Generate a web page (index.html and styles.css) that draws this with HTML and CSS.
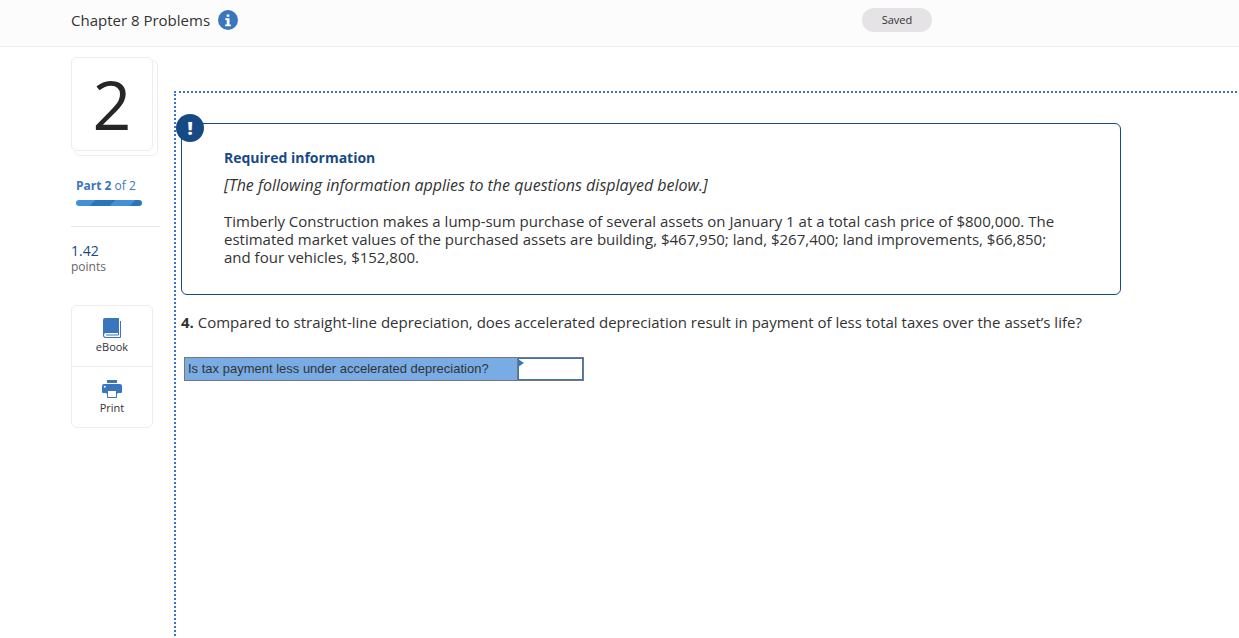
FILE: index.html
```html
<!DOCTYPE html>
<html lang="en">
<head>
  <meta charset="utf-8">
  <title>Chapter 8 Problems</title>
  <meta name="viewport" content="width=device-width, initial-scale=1.0">
  <link rel="stylesheet" href="styles.css">
</head>
<body>
  <header class="header">
    <h1 class="title">Chapter 8 Problems</h1>
    <button class="info-button" type="button" aria-label="Assignment information">
      <svg width="20" height="20" viewBox="0 0 20 20">
        <circle cx="10" cy="10" r="10" fill="#3a76bb"/>
        <path d="M8.600 4.500h2.800v2.300H8.600zM7.300 8.300h4.200v6.200h1.300v1.800H7.200v-1.800h1.500V10H7.300z" fill="#fff"/>
      </svg>
    </button>
    <span class="status">Saved</span>
  </header>

  <div class="page">
    <aside class="sidebar">
      <div class="number-card">2</div>
      <div class="part"><b>Part 2</b> of 2</div>
      <div class="part-bar"></div>
      <div class="points">
        <span class="points-value">1.42</span>
        <span class="points-label">points</span>
      </div>
      <div class="tools">
        <button class="tool" type="button">
          <svg width="20" height="20" viewBox="0 0 20 20">
            <path d="M3 0h14v15H4Q2 15 2 17t2 2h13v1H3.500Q1 20 1 17V2Q1 0 3 0z" fill="#3a76bb"/>
            <path d="M4 17h12.500v-2M18.500 3v16.500H4" fill="none" stroke="#3a76bb"/>
          </svg>
          eBook
        </button>
        <button class="tool" type="button">
          <svg width="20" height="20" viewBox="0 0 20 20">
            <path d="M5 1h10v3H5zM2 5h16q2 0 2 2v6q0 1-1 1H1q-1 0-1-1V7q0-2 2-2z" fill="#3a76bb"/>
            <circle cx="2.800" cy="7.800" r="1" fill="#fff"/>
            <path d="M4 11h1v7.500h10V11h1v3.500H4z" fill="#3a76bb"/>
            <path d="M5.500 11.500h9v7h-9z" fill="#fff" stroke="#3a76bb"/>
          </svg>
          Print
        </button>
      </div>
    </aside>

    <main class="content">
      <section class="required">
        <span class="badge">!</span>
        <h2 class="required-title">Required information</h2>
        <p class="note">[The following information applies to the questions displayed below.]</p>
        <p class="text">Timberly Construction makes a lump-sum purchase of several assets on January 1 at a total cash price of $800,000. The estimated market values of the purchased assets are building, $467,950; land, $267,400; land improvements, $66,850; and four vehicles, $152,800.</p>
      </section>

      <p class="question"><b>4.</b> Compared to straight-line depreciation, does accelerated depreciation result in payment of less total taxes over the asset’s life?</p>

      <div class="answer">
        <label class="answer-label" for="taxAnswer">Is tax payment less under accelerated depreciation?</label>
        <div class="answer-cell">
          <input class="answer-input" id="taxAnswer" type="text">
        </div>
      </div>
    </main>
  </div>
</body>
</html>
```

FILE: styles.css
```css
* {
  box-sizing: border-box;
}

body {
  display: flex;
  flex-direction: column;
  min-height: 100vh;
  margin: 0;
  background-color: #fff;
  color: #333;
  font-family: 'Open Sans', sans-serif;
  font-size: 15px;
}

h1, h2, p {
  margin: 0;
}

b {
  font-weight: 700;
}

button {
  padding: 0;
  border: none;
  background: none;
  font-family: inherit;
  cursor: pointer;
}

.header {
  display: flex;
  align-items: center;
  height: 47px;
  padding: 0 307px 6px 71px;
  background-color: #fcfcfc;
  border-bottom: 1px solid #ededed;
}

.title {
  font-size: 15px;
  font-weight: 400;
  line-height: 18px;
}

.info-button {
  display: flex;
  margin-left: 8px;
}

.status {
  width: 70px;
  margin-left: auto;
  border-radius: 12px;
  background-color: #e5e3e6;
  font-size: 11px;
  line-height: 24px;
  text-align: center;
}

.page {
  display: flex;
  flex: 1;
}

.sidebar {
  width: 174px;
  padding: 10px 14px 0 71px;
}

.number-card {
  position: relative;
  width: 82px;
  height: 94px;
  border: 1px solid #ededed;
  border-radius: 6px;
  background-color: #fff;
  color: #262626;
  font-size: 68px;
  line-height: 92px;
  text-align: center;
}

/* second card peeking out from behind */
.number-card::after {
  content: '';
  position: absolute;
  top: 2px;
  left: 2px;
  right: -6px;
  bottom: -6px;
  z-index: -1;
  border: 1px solid #ededed;
  border-radius: 6px;
}

.part {
  margin: 25px 0 0 5px;
  color: #3a76bb;
  font-size: 12px;
  line-height: 20px;
}

.part-bar {
  width: 66px;
  height: 6px;
  margin: 4px 0 20px 5px;
  border-radius: 3px;
  background: repeating-linear-gradient(135deg, #4390d8 0 14px, #2a75bb 14px 28px);
}

.points {
  display: flex;
  flex-direction: column;
  padding-top: 16px;
  border-top: 1px solid #e6e6e6;
}

.points-value {
  color: #174a84;
  font-size: 14px;
  line-height: 16px;
}

.points-label {
  color: #666;
  font-size: 12px;
  line-height: 16px;
}

.tools {
  width: 82px;
  margin-top: 30px;
  border: 1px solid #ededed;
  border-radius: 6px;
}

.tool {
  display: flex;
  flex-direction: column;
  align-items: center;
  width: 100%;
  height: 60px;
  padding-top: 12px;
  color: #333;
  font-size: 11px;
  line-height: 18px;
}

.tool + .tool {
  height: 61px;
  border-top: 1px solid #ededed;
}

.content {
  flex: 1;
  min-width: 0;
  margin: 44px 2px 2px 0;
  padding: 30px 116px 0 5px;
  border-top: 2px dotted #3a76bb;
  border-left: 2px dotted #3a76bb;
}

.required {
  position: relative;
  padding: 24px 48px 28px 42px;
  border: 1px solid #174a84;
  border-radius: 6px;
}

.badge {
  position: absolute;
  top: -10px;
  left: -6px;
  width: 28px;
  height: 28px;
  border-radius: 50%;
  background-color: #174a84;
  color: #fff;
  font-size: 18px;
  font-weight: 800;
  line-height: 28px;
  text-align: center;
}

.required-title {
  color: #174a84;
  font-size: 14px;
  font-weight: 700;
  line-height: 20px;
}

.note {
  margin-top: 8px;
  font-size: 16px;
  font-style: italic;
  line-height: 18px;
}

.text {
  margin-top: 18px;
  line-height: 18px;
}

.question {
  margin-top: 18px;
  line-height: 18px;
  white-space: nowrap;
}

.answer {
  display: flex;
  width: 400px;
  margin: 26px 0 0 3px;
  border: 1px solid #777;
  background-color: #79ace5;
  font-family: 'Liberation Sans', Arial, sans-serif;
  font-size: 13px;
}

.answer-label {
  flex: 1;
  padding-left: 3px;
  line-height: 22px;
}

.answer-cell {
  position: relative;
  width: 66px;
  height: 22px;
  border-left: 1px solid #777;
}

.answer-cell::before {
  content: '';
  position: absolute;
  top: 1px;
  left: 0;
  border-top: 4px solid transparent;
  border-bottom: 4px solid transparent;
  border-left: 6px solid #3a76bb;
}

.answer-input {
  display: block;
  width: 100%;
  height: 100%;
  padding: 0 6px;
  border: 1px solid #3a76bb;
  background-color: #fff;
  font-family: inherit;
  font-size: 13px;
}
```
